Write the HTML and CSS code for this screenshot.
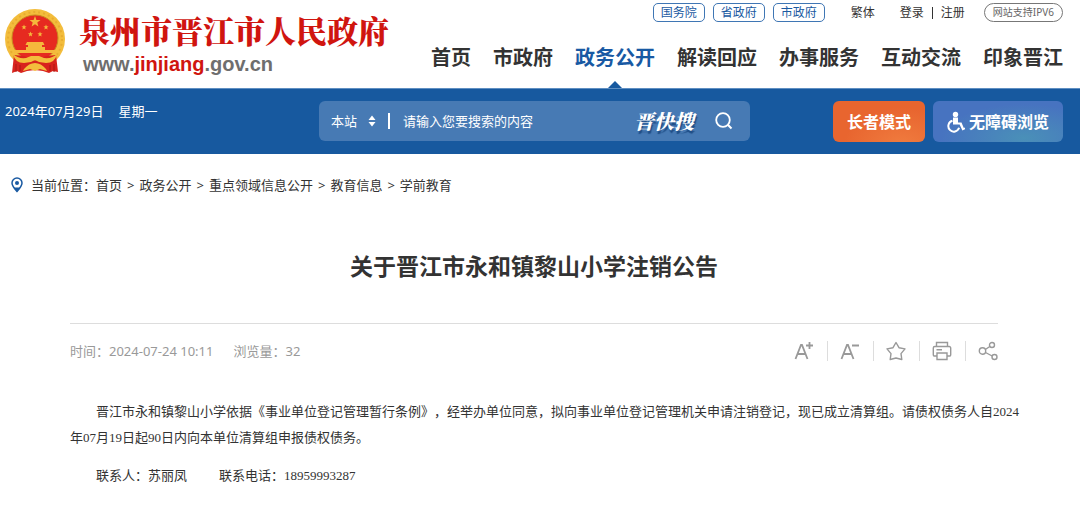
FILE: index.html
```html
<!DOCTYPE html>
<html lang="zh-CN">
<head>
<meta charset="utf-8">
<meta name="viewport" content="width=device-width, initial-scale=1">
<title>关于晋江市永和镇黎山小学注销公告</title>
<link rel="stylesheet" href="styles.css">
</head>
<body>
<header class="header">
  <a class="brand" href="#">
    <svg class="emblem" viewBox="0 0 60 66" aria-hidden="true">
      <circle cx="30" cy="31" r="30" fill="#f3bd3c"/>
      <circle cx="30" cy="31" r="27" fill="none" stroke="#e8ac30" stroke-width="2" stroke-dasharray="2 3"/>
      <circle cx="30" cy="30" r="23" fill="#e62a20" stroke="#c9891f" stroke-width="1"/>
      <g fill="#f5b83c">
        <path d="M30 8l1.400 3.900 4.100.1-3.200 2.500 1.100 4L30 16.200l-3.400 2.300 1.100-4-3.200-2.500 4.100-.1z"/>
        <path d="M19 16.500l.7 1.800 1.900.1-1.500 1.200.5 1.900-1.600-1.100-1.600 1.100.5-1.900-1.500-1.200 1.900-.1zM41 16.500l.7 1.800 1.900.1-1.500 1.200.5 1.900-1.600-1.100-1.600 1.100.5-1.900-1.500-1.200 1.900-.1zM25.500 23.500l.7 1.800 1.900.1-1.500 1.200.5 1.900-1.600-1.100-1.600 1.100.5-1.900-1.500-1.200 1.900-.1zM35 23.500l.7 1.800 1.900.1-1.500 1.200.5 1.900-1.600-1.100-1.600 1.100.5-1.900-1.500-1.200 1.900-.1z"/>
        <path d="M22 34h16l1.500 3h-19zM23 37h14v2H23zM21 39h19v3H21z"/>
        <path d="M10 42h40l1 3H9z"/>
      </g>
      <path d="M9 47l10 1 11 5 11-5 10-1 2 17-5-1-4 2-6-2-8-1-8 1-6 2-4-2-5 2z" fill="#d8231d"/>
      <path d="M8 46q5 5 13 4l5-2h8l5 2q8 1 13-4-2 9-11 9l-7-1-4-2-4 2-7 1q-9 0-11-9z" fill="#f3bd3c"/>
      <path d="M19 61q5-6 11-6t11 6l1 2-7-2-5 2-5-2-7 2z" fill="#f3bd3c"/>
      <path d="M11 56v8M49 56v8M15 57v6M45 57v6" fill="none" stroke="#aa1814" stroke-width="1"/>
    </svg>
    <span class="brand-text">
      <span class="brand-name">泉州市晋江市人民政府</span>
      <span class="brand-url">www.<em>jinjiang</em>.gov.cn</span>
    </span>
  </a>
  <div class="header-right">
    <div class="top-links">
      <a class="chip" href="#">国务院</a>
      <a class="chip" href="#">省政府</a>
      <a class="chip" href="#">市政府</a>
      <a class="lang" href="#">繁体</a>
      <span class="account"><a href="#">登录</a><i class="account-bar"></i><a href="#">注册</a></span>
      <a class="pill" href="#">网站支持IPV6</a>
    </div>
    <nav class="nav">
      <a href="#">首页</a>
      <a href="#">市政府</a>
      <a class="active" href="#">政务公开</a>
      <a href="#">解读回应</a>
      <a href="#">办事服务</a>
      <a href="#">互动交流</a>
      <a href="#">印象晋江</a>
    </nav>
  </div>
</header>

<div class="banner">
  <div class="date"><span>2024年07月29日</span><span>星期一</span></div>
  <form class="search">
    <label class="scope">
      <select aria-label="搜索范围"><option>本站</option></select>
      <svg viewBox="0 0 8 12" aria-hidden="true"><path d="M4 0.500L7.500 5h-7zM4 11.500L7.500 7h-7z" fill="#fff"/></svg>
    </label>
    <input type="text" aria-label="搜索内容" placeholder="请输入您要搜索的内容">
    <span class="search-mark">晋快搜</span>
    <button class="search-btn" type="button" aria-label="搜索">
      <svg viewBox="0 0 18 18" aria-hidden="true"><circle cx="8" cy="8" r="6.800" fill="none" stroke="#fff" stroke-width="1.800"/><path d="M12.800 12.800L16.500 16.500" stroke="#fff" stroke-width="2"/></svg>
    </button>
  </form>
  <div class="modes">
    <button class="mode mode-elder" type="button">长者模式</button>
    <button class="mode mode-access" type="button">
      <svg viewBox="0 0 18 22" aria-hidden="true"><circle cx="8.500" cy="3.500" r="2.700" fill="#fff"/><path d="M6 6.500h5v5h3.500l2.300 5.500 1-.5.500 1.700-2.900 1.400-2.800-6H6z" fill="#fff"/><path d="M5.500 9.800a5.500 5.500 0 1 0 6.600 7" fill="none" stroke="#fff" stroke-width="2"/></svg>
      无障碍浏览
    </button>
  </div>
</div>

<nav class="crumbs" aria-label="当前位置">
  <svg viewBox="0 0 12 16" aria-hidden="true"><path d="M6 1a5 5 0 0 1 5 5c0 3-5 8.500-5 8.500S1 9 1 6a5 5 0 0 1 5-5z" fill="#fff" stroke="#1a5aa2" stroke-width="1.500"/><path d="M3 10.500h6l-3 4z" fill="#1a5aa2"/><circle cx="6" cy="6" r="2" fill="#1a5aa2"/></svg>
  <span class="crumbs-label">当前位置：</span>
  <span class="trail">
    <a href="#">首页</a><span>&gt;</span>
    <a href="#">政务公开</a><span>&gt;</span>
    <a href="#">重点领域信息公开</a><span>&gt;</span>
    <a href="#">教育信息</a><span>&gt;</span>
    <a href="#">学前教育</a>
  </span>
</nav>

<main class="article">
  <h1>关于晋江市永和镇黎山小学注销公告</h1>
  <div class="meta">
    <div class="meta-info"><span>时间：2024-07-24 10:11</span><span>浏览量：32</span></div>
    <div class="tools">
      <button type="button" aria-label="放大字号"><svg class="bold" viewBox="0 0 20 20"><path d="M1.500 18L7 4h1L13.500 18M3.500 13h8M12 4.500h7M15.500 1v7"/></svg></button>
      <button type="button" aria-label="缩小字号"><svg class="bold" viewBox="0 0 20 20"><path d="M1.500 18L7 4h1L13.500 18M3.500 13h8M12 4.500h7"/></svg></button>
      <button type="button" aria-label="收藏"><svg viewBox="0 0 20 20"><path stroke-linejoin="round" d="M10 1.500L13 6.700l6 1.200-4 4.700.8 5.900-5.800-1.500-5.800 1.500.8-5.900-4-4.700 6-1.200z"/></svg></button>
      <button type="button" aria-label="打印"><svg viewBox="0 0 20 20"><path d="M4.500 5.500v-4h11v4M5 15H2.500a1.200 1.200 0 0 1-1.200-1.200V7A1.500 1.500 0 0 1 2.800 5.500h14.400A1.500 1.500 0 0 1 18.700 7v6.800a1.200 1.200 0 0 1-1.200 1.200H15M5 12h10v6.500H5zM4.500 8.800h5.500"/></svg></button>
      <button type="button" aria-label="分享"><svg viewBox="0 0 20 20"><circle cx="4.500" cy="10" r="3.200"/><circle cx="14" cy="4" r="2.500"/><circle cx="16.500" cy="16" r="2.500"/><path d="M7.300 8.500l4.500-3M7.500 11.500l6.700 3.500"/></svg></button>
    </div>
  </div>
  <div class="content">
    <p>晋江市永和镇黎山小学依据《事业单位登记管理暂行条例》，经举办单位同意，拟向事业单位登记管理机关申请注销登记，现已成立清算组。请债权债务人自2024年07月19日起90日内向本单位清算组申报债权债务。</p>
    <p class="contact"><span>联系人：苏丽凤</span><span>联系电话：18959993287</span></p>
  </div>
</main>
</body>
</html>
```
FILE: styles.css
```css
* {
  box-sizing: border-box;
}

body {
  margin: 0;
  background: #fff;
  color: #333;
  font: 13px/20px "Noto Sans", "Noto Sans CJK SC", sans-serif;
}

a {
  color: inherit;
  text-decoration: none;
}

button,
input,
select {
  margin: 0;
  padding: 0;
  border: 0;
  background: none;
  color: inherit;
  font: inherit;
}

svg {
  display: block;
  flex: none;
}

/* Header */
.header {
  display: flex;
  justify-content: space-between;
  min-height: 88px;
  padding: 0 17px 0 5px;
}

.brand {
  display: flex;
  gap: 14px;
  padding-top: 8px;
}

.emblem {
  width: 60px;
  height: 66px;
}

.brand-text {
  display: flex;
  flex-direction: column;
}

.brand-name {
  color: #d0150f;
  font: 900 31px/44px "Noto Serif CJK SC", "Noto Sans CJK SC", serif;
  white-space: nowrap;
}

.brand-url {
  padding-left: 4px;
  color: #6e6e6e;
  font: bold 20px/24px "Liberation Sans", sans-serif;
}

.brand-url em {
  color: #d0150f;
  font-style: normal;
}

.header-right {
  display: flex;
  flex-direction: column;
  align-items: flex-end;
  justify-content: space-between;
}

.top-links {
  display: flex;
  align-items: center;
  padding-top: 3px;
  font-size: 12px;
  line-height: 17px;
  white-space: nowrap;
}

.chip {
  margin-right: 8px;
  padding: 0 7px;
  border: 1px solid #3f76b4;
  border-radius: 5px;
  color: #1a5aa2;
}

.lang {
  margin: 0 25px 0 18px;
}

.account {
  display: flex;
  align-items: center;
  gap: 8px;
}

.account-bar {
  width: 1px;
  height: 12px;
  background: #333;
}

.pill {
  margin-left: 19px;
  padding: 0 8px;
  border: 1px solid #777;
  border-radius: 10px;
  color: #666;
  font-size: 10px;
}

.nav {
  display: flex;
  gap: 22px;
  font-size: 20px;
  font-weight: bold;
  line-height: 30px;
  white-space: nowrap;
}

.nav a {
  padding-bottom: 15px;
}

.nav .active {
  position: relative;
  color: #1859a3;
}

.nav .active::after {
  content: "";
  position: absolute;
  bottom: 0;
  left: 50%;
  margin-left: -7px;
  border: 7px solid transparent;
  border-top: 0;
  border-bottom-color: #17599f;
}

/* Banner */
.banner {
  display: flex;
  align-items: flex-start;
  justify-content: space-between;
  min-height: 65px;
  padding: 12px 17px 12px 5px;
  border-top: 1px solid #5f8fc2;
  background: #17599f;
  color: #fff;
}

.date {
  display: flex;
  flex: none;
  gap: 15px;
  width: 314px;
}

.search {
  display: flex;
  flex: 0 1 431px;
  align-items: center;
  height: 40px;
  padding: 0 17px 0 12px;
  border-radius: 6px;
  background: #477ab4;
}

.scope {
  display: flex;
  align-items: center;
  gap: 10px;
  padding-right: 12px;
  border-right: 2px solid #fff;
  line-height: 16px;
}

.scope select {
  width: 27px;
  height: 16px;
  appearance: none;
}

.scope svg {
  width: 8px;
  height: 12px;
}

.search input {
  flex: 1;
  min-width: 0;
  padding-left: 13px;
}

.search input::placeholder {
  color: #fff;
  opacity: 1;
}

.search-mark {
  font: italic 900 20px/28px "Noto Serif CJK SC", "Noto Sans CJK SC", serif;
  text-shadow: 1px 3px 1px #1f4e87;
}

.search-btn {
  margin-left: 21px;
}

.search-btn svg {
  width: 18px;
  height: 18px;
}

.modes {
  display: flex;
  flex: none;
  gap: 8px;
  margin-left: auto;
}

.mode {
  display: flex;
  align-items: center;
  justify-content: center;
  gap: 4px;
  height: 41px;
  border-radius: 6px;
  font-size: 16px;
  font-weight: bold;
  white-space: nowrap;
}

.mode-elder {
  width: 92px;
  background: radial-gradient(ellipse at 75% 110%, #f07c3f, #e8652f 60%);
}

.mode-access {
  width: 130px;
  background: radial-gradient(ellipse at 70% 90%, #4a90b8, #4773c0 65%);
}

.mode-access svg {
  width: 18px;
  height: 22px;
}

/* Breadcrumbs */
.crumbs {
  display: flex;
  align-items: center;
  padding: 21px 11px 0;
}

.crumbs svg {
  width: 12px;
  height: 16px;
  margin-right: 8px;
}

.trail {
  display: flex;
  gap: 5px;
}

/* Article */
.article {
  padding: 54px 58px 24px 70px;
}

h1 {
  margin: 0;
  padding: 0 24px 39px 0;
  font-size: 23px;
  line-height: 35px;
  text-align: center;
}

.meta {
  display: flex;
  align-items: center;
  justify-content: space-between;
  margin-right: 24px;
  padding-top: 17px;
  border-top: 1px solid #ddd;
  color: #999;
}

.meta-info {
  display: flex;
  gap: 20px;
}

.tools {
  display: flex;
}

.tools button {
  padding: 0 13px 0 12px;
}

.tools button + button {
  border-left: 1px solid #ddd;
}

.tools button:last-child {
  padding-right: 0;
}

.tools svg {
  width: 20px;
  height: 20px;
  fill: none;
  stroke: #999;
  stroke-width: 1.4;
}

.tools .bold {
  stroke-width: 1.8;
}

.content {
  margin-right: -12px;
  padding: 38px 12px 0 0;
  font-family: "Liberation Serif", "Noto Sans CJK SC", serif;
  line-height: 26px;
  text-spacing-trim: space-all;
}

.content p {
  margin: 0 0 12px;
  text-indent: 2em;
}

.contact {
  display: flex;
  gap: 6px;
}
```
